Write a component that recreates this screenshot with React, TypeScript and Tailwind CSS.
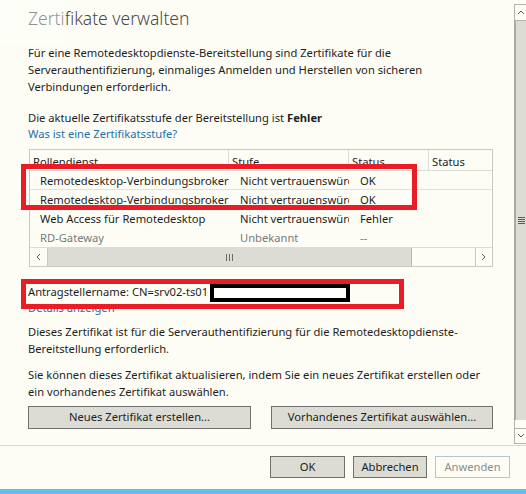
const rows = [
  { name: "Remotedesktop-Verbindungsbroker", level: "Nicht vertrauenswürdig", status: "OK", dim: false, line: true },
  { name: "Remotedesktop-Verbindungsbroker", level: "Nicht vertrauenswürdig", status: "OK", dim: false, line: false },
  { name: "Web Access für Remotedesktop", level: "Nicht vertrauenswürdig", status: "Fehler", dim: false, line: false },
  { name: "RD-Gateway", level: "Unbekannt", status: "--", dim: true, line: false },
];

const Chevron = ({ dir }: { dir: "up" | "down" | "left" | "right" }) => {
  const pts = {
    up: "1,5 4,2 7,5",
    down: "1,2 4,5 7,2",
    left: "5,1 2,4 5,7",
    right: "2,1 5,4 2,7",
  }[dir];
  return (
    <svg width="8" height="8" viewBox="0 0 8 8">
      <polyline points={pts} fill="none" stroke="#606060" strokeWidth="1" />
    </svg>
  );
};

export default function App() {
  return (
    <div className="relative w-[526px] h-[494px] overflow-hidden bg-[#fdfdf6] text-[11.2px] text-[#1e1e1e] font-['Noto_Sans',sans-serif] flex flex-col">
      <div className="flex h-[445px]">
        {/* main panel */}
        <div className="relative flex-1 pl-[28px] pr-[21px]">
          <h1 className="pt-[6px] text-[17.5px] leading-[24px] font-light text-[#4a4a4a]">Zertifikate verwalten</h1>

          <p className="mt-[14px] leading-[17px]">
            Für eine Remotedesktopdienste-Bereitstellung sind Zertifikate für die<br />Serverauthentifizierung, einmaliges Anmelden und Herstellen von sicheren<br />Verbindungen erforderlich.
          </p>

          <p className="mt-[14px] leading-[17px]">
            Die aktuelle Zertifikatsstufe der Bereitstellung ist <span className="font-bold">Fehler</span>
          </p>
          <a className="block leading-[15px] text-[#2470a8]">Was ist eine Zertifikatsstufe?</a>

          {/* table */}
          <div className="mt-[8px] ml-[1px] border border-[#c9c9c1]">
            <div className="flex h-[21px] border-b border-[#dcdcd4] items-end leading-[16px]">
              <div className="w-[199px] pl-[3px] border-r border-[#dcdcd4] h-full flex items-end">Rollendienst</div>
              <div className="w-[120px] pl-[3px] border-r border-[#dcdcd4] h-full flex items-end">Stufe</div>
              <div className="w-[80px] pl-[3px] border-r border-[#dcdcd4] h-full flex items-end">Status</div>
              <div className="flex-1 pl-[3px] h-full flex items-end">Status</div>
            </div>
            {rows.map((r, i) => (
              <div
                key={i}
                className={`flex h-[19px] pt-[2px] leading-[16px] whitespace-nowrap ${r.line ? "border-b border-[#e2e2da]" : ""} ${r.dim ? "text-[#7a7a7a]" : ""}`}
              >
                <div className="w-[199px] pl-[10px] pr-[3px] overflow-hidden">{r.name}</div>
                <div className="w-[120px] pl-[11px] pr-[4px] overflow-hidden">{r.level}</div>
                <div className="w-[80px] pl-[11px] overflow-hidden">{r.status}</div>
                <div className="flex-1" />
              </div>
            ))}
            {/* horizontal scrollbar */}
            <div className="flex h-[19px] border-t border-[#dcdcd4]">
              <div className="w-[18px] flex items-center justify-center border-r border-[#c9c9c1]">
                <Chevron dir="left" />
              </div>
              <div className="w-[364px] bg-[#dcdcd4] border-r border-[#b9b9b1] flex items-center justify-center">
                <div className="flex gap-[2px]">
                  <div className="w-px h-[7px] bg-[#6a6a6a]" />
                  <div className="w-px h-[7px] bg-[#6a6a6a]" />
                  <div className="w-px h-[7px] bg-[#6a6a6a]" />
                </div>
              </div>
              <div className="flex-1" />
              <div className="w-[17px] flex items-center justify-center border-l border-[#c9c9c1]">
                <Chevron dir="right" />
              </div>
            </div>
          </div>

          <div className="mt-[17px] leading-[16px]">Antragstellername: CN=srv02-ts01</div>
          <a className="block leading-[16px] text-[#2470a8]">Details anzeigen</a>

          <p className="mt-[7px] leading-[17px]">
            Dieses Zertifikat ist für die Serverauthentifizierung für die Remotedesktopdienste-<br />Bereitstellung erforderlich.
          </p>
          <p className="mt-[9px] leading-[17px]">
            Sie können dieses Zertifikat aktualisieren, indem Sie ein neues Zertifikat erstellen oder<br />ein vorhandenes Zertifikat auswählen.
          </p>

          <div className="mt-[6px] flex gap-[20px]">
            <button className="w-[223px] h-[23px] bg-[#dcdcd4] border border-[#707070]">Neues Zertifikat erstellen...</button>
            <button className="w-[222px] h-[23px] bg-[#dcdcd4] border border-[#707070]">Vorhandenes Zertifikat auswählen...</button>
          </div>

          {/* annotations */}
          <div className="absolute left-[21px] top-[164px] w-[396px] h-[46px] border-[5px] border-[#ea1c25]" />
          <div className="absolute left-[21px] top-[279px] w-[383px] h-[30px] border-[5px] border-[#ea1c25]" />
          <div className="absolute left-[210px] top-[284px] w-[140px] h-[18px] border-[4px] border-black bg-white" />
          <div className="absolute left-0 top-0 w-[66px] h-[44px] bg-white/40 backdrop-blur-[0.6px]" />
        </div>

        {/* vertical scrollbar */}
        <div className="w-[13px] pt-[4px] flex flex-col">
          <div className="h-[17px] border border-r-0 border-[#b4b4ac] flex items-center justify-center">
            <Chevron dir="up" />
          </div>
          <div className="h-[399px] bg-[#dcdcd4] border-l-2 border-[#a9a9a1] flex items-center justify-center">
            <div className="flex flex-col gap-[1px]">
              <div className="w-[7px] h-px bg-[#5a5a5a]" />
              <div className="w-[7px] h-px bg-[#5a5a5a]" />
              <div className="w-[7px] h-px bg-[#5a5a5a]" />
              <div className="w-[7px] h-px bg-[#5a5a5a]" />
            </div>
          </div>
          <div className="h-[8px] border-l border-[#b4b4ac]" />
          <div className="h-[16px] border border-r-0 border-[#b4b4ac] flex items-center justify-center">
            <Chevron dir="down" />
          </div>
        </div>
      </div>

      <div className="h-px bg-[#d9d9d1]" />

      <div className="h-[43px] flex justify-end gap-[8px] pr-[16px] pt-[10px]">
        <button className="w-[75px] h-[22px] bg-[#dcdcd4] border border-[#707070]">OK</button>
        <button className="w-[74px] h-[22px] bg-[#dcdcd4] border border-[#707070]">Abbrechen</button>
        <button className="w-[75px] h-[22px] border border-[#b5c5d2] text-[#8c8c8c]">Anwenden</button>
      </div>

      <div className="h-[5px] bg-[#5ec2e8]" />
    </div>
  );
}
